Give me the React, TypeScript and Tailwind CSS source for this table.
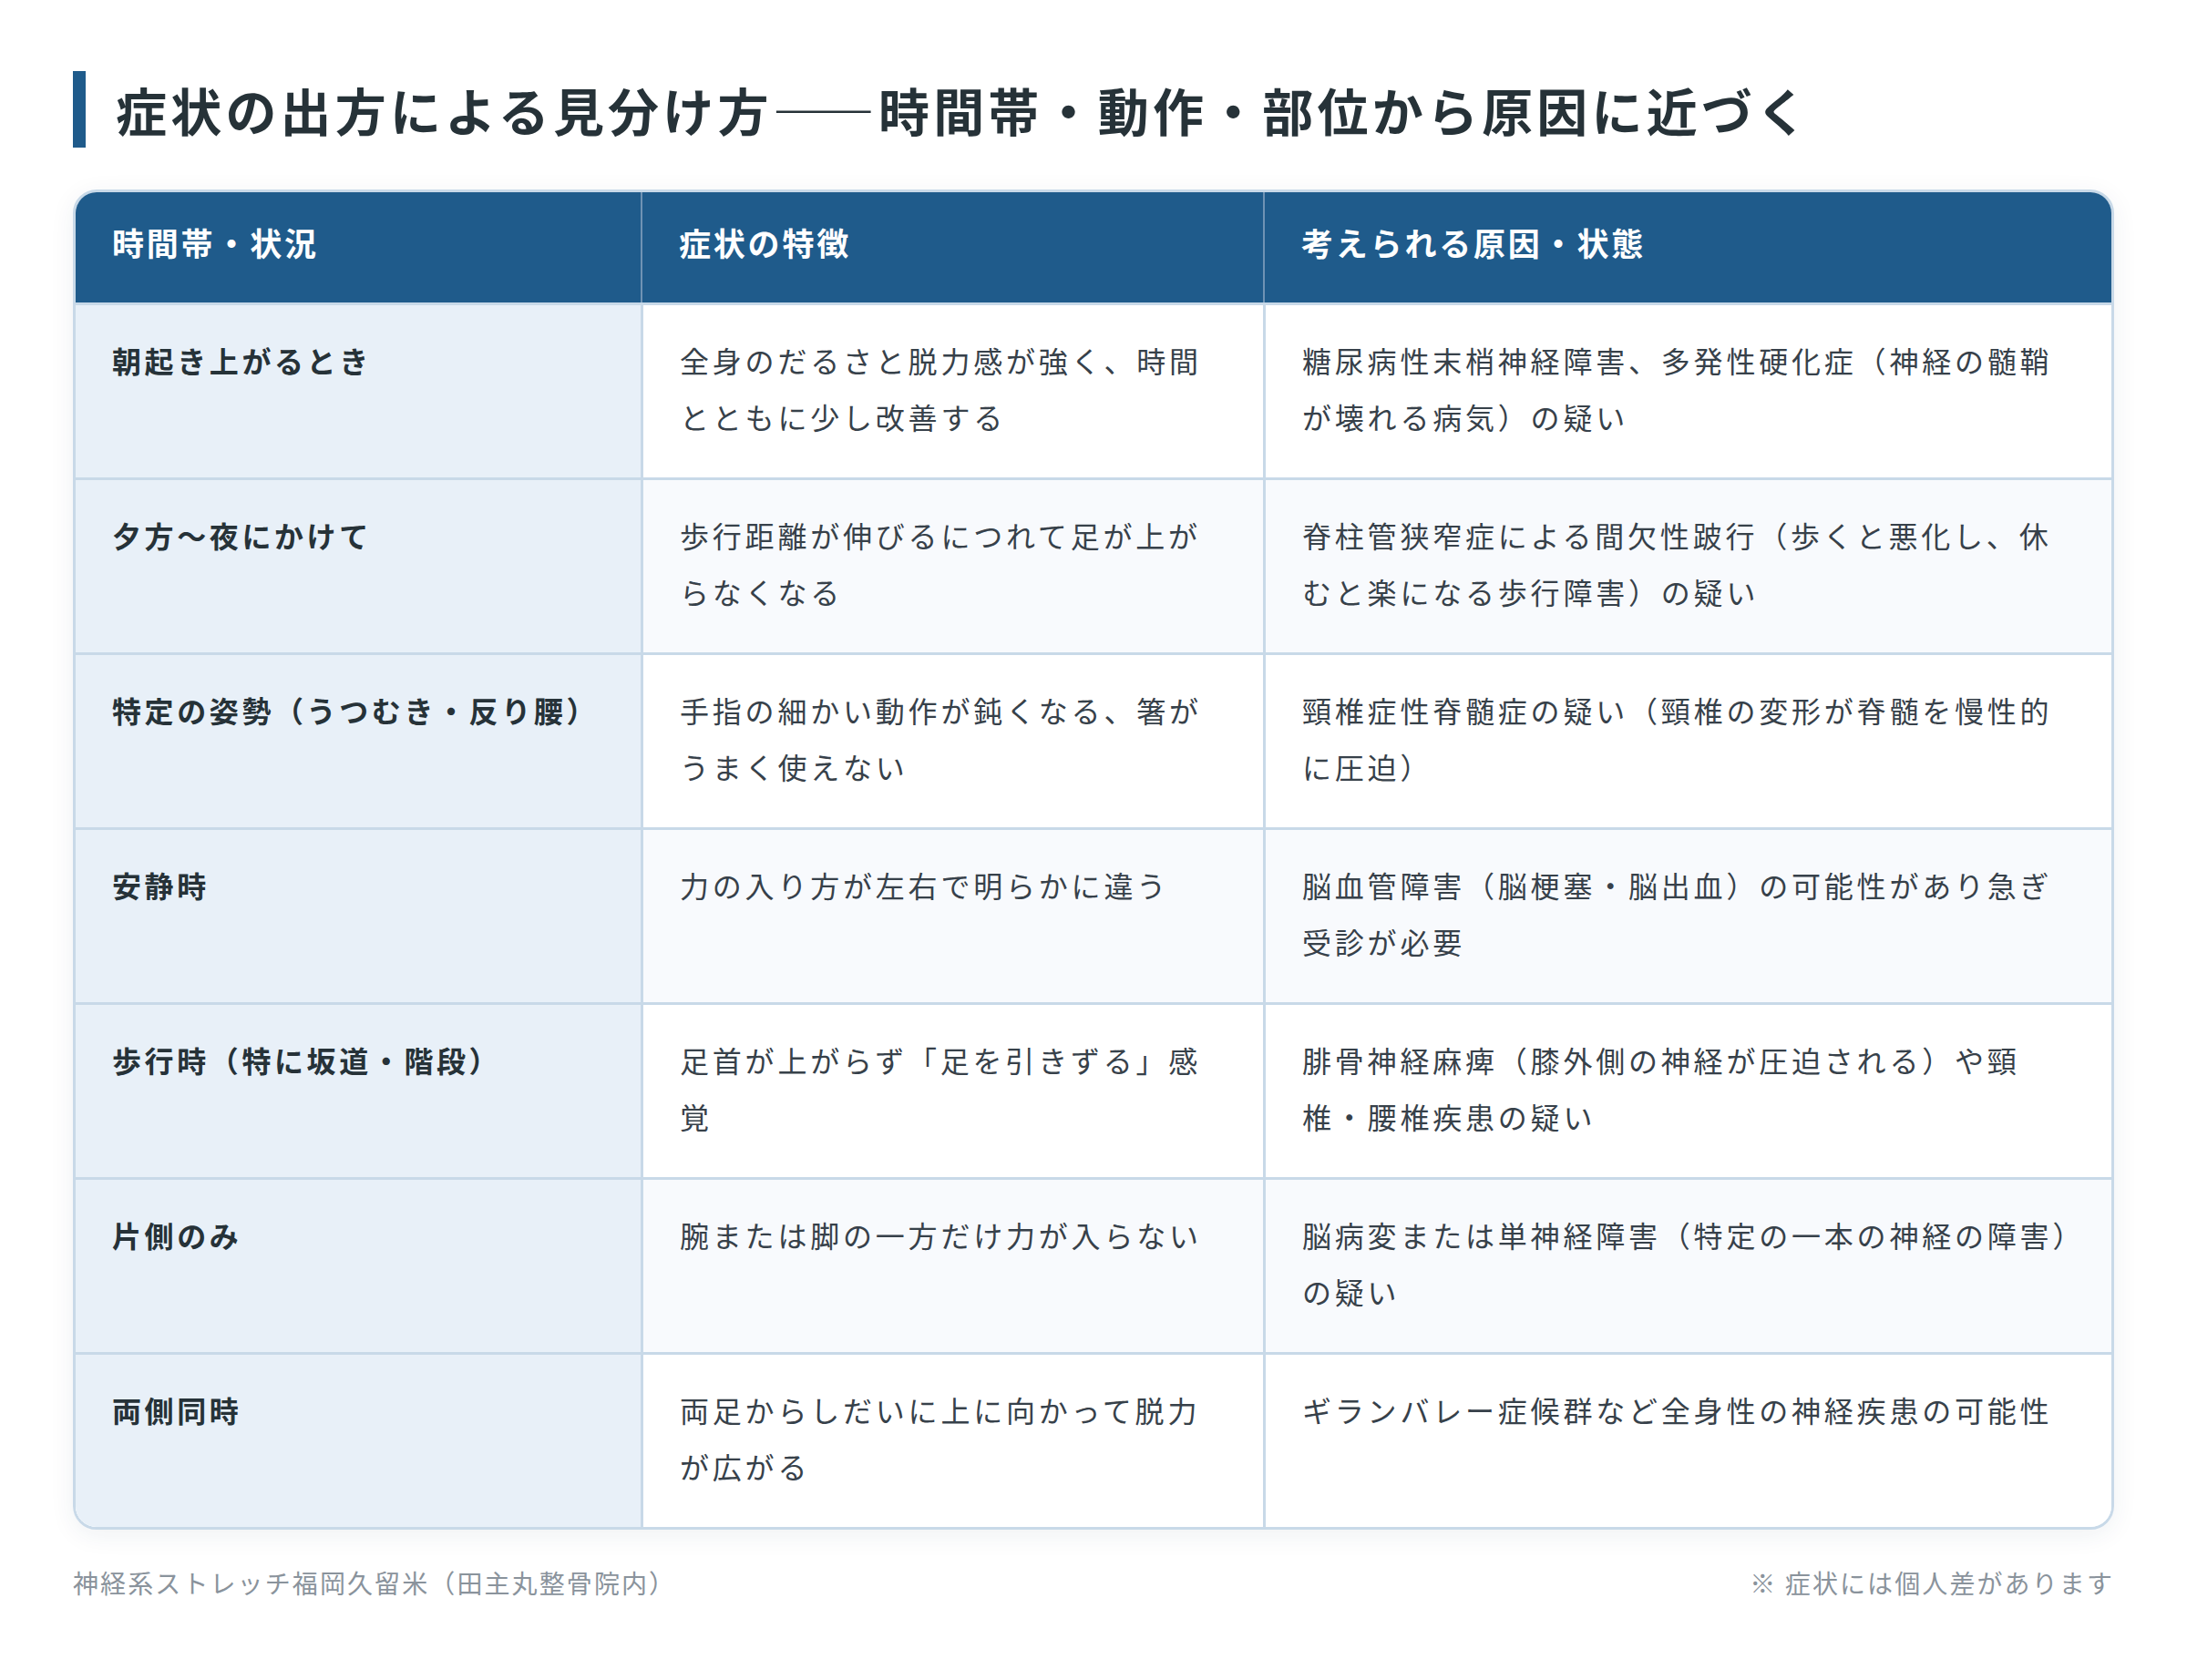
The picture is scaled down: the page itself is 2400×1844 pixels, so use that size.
const rows = [
  {
    when: "朝起き上がるとき",
    symptom: "全身のだるさと脱力感が強く、時間とともに少し改善する",
    cause: "糖尿病性末梢神経障害、多発性硬化症（神経の髄鞘が壊れる病気）の疑い",
  },
  {
    when: "夕方〜夜にかけて",
    symptom: "歩行距離が伸びるにつれて足が上がらなくなる",
    cause: "脊柱管狭窄症による間欠性跛行（歩くと悪化し、休むと楽になる歩行障害）の疑い",
  },
  {
    when: "特定の姿勢（うつむき・反り腰）",
    symptom: "手指の細かい動作が鈍くなる、箸がうまく使えない",
    cause: "頸椎症性脊髄症の疑い（頸椎の変形が脊髄を慢性的に圧迫）",
  },
  {
    when: "安静時",
    symptom: "力の入り方が左右で明らかに違う",
    cause: "脳血管障害（脳梗塞・脳出血）の可能性があり急ぎ受診が必要",
  },
  {
    when: "歩行時（特に坂道・階段）",
    symptom: "足首が上がらず「足を引きずる」感覚",
    cause: "腓骨神経麻痺（膝外側の神経が圧迫される）や頸椎・腰椎疾患の疑い",
  },
  {
    when: "片側のみ",
    symptom: "腕または脚の一方だけ力が入らない",
    cause: "脳病変または単神経障害（特定の一本の神経の障害）の疑い",
  },
  {
    when: "両側同時",
    symptom: "両足からしだいに上に向かって脱力が広がる",
    cause: "ギランバレー症候群など全身性の神経疾患の可能性",
  },
]

export default function App() {
  return (
    <div
      className="min-h-[1844px] bg-white px-[80px] pt-[78px]"
      style={{ fontFamily: '"Noto Sans CJK JP", "Noto Sans", sans-serif' }}
    >
      <h1 className="border-l-[14px] border-[#1f5b8b] pl-[33px] text-[56px] leading-[84px] font-bold tracking-[4.2px] text-[#263238]">
        症状の出方による見分け方<span className="[font-feature-settings:'fwid']">——</span>時間帯・動作・部位から原因に近づく
      </h1>

      <div className="mt-[46px] overflow-hidden rounded-[26px] border-[3px] border-[#c8d9e8] shadow-[0_6px_28px_rgba(30,60,90,0.07)]">
        <div className="grid grid-cols-[620px_683px_1fr] bg-[#1f5b8b] text-[35px] leading-[48px] font-bold tracking-[2.8px] text-white">
          <div className="px-[40px] pt-[31px] pb-[42px]">時間帯・状況</div>
          <div className="border-l-2 border-[#6f93b4] px-[40px] pt-[31px] pb-[42px]">症状の特徴</div>
          <div className="border-l-2 border-[#6f93b4] px-[40px] pt-[31px] pb-[42px]">考えられる原因・状態</div>
        </div>

        {rows.map((row, i) => (
          <div
            key={i}
            className={`grid grid-cols-[620px_683px_1fr] border-t-[3px] border-[#c8d9e8] text-[32px] leading-[62px] ${
              i % 2 === 1 ? "bg-[#f8fafd]" : "bg-white"
            }`}
          >
            <div className="bg-[#e8f0f8] px-[40px] pt-[29px] pb-[36px] font-bold tracking-[3.6px] text-[#263238]">
              {row.when}
            </div>
            <div className="border-l-[3px] border-[#c8d9e8] px-[40px] pt-[29px] pb-[36px] tracking-[3.8px] text-[#37414a]">
              {row.symptom}
            </div>
            <div className="border-l-[3px] border-[#c8d9e8] px-[40px] pt-[29px] pb-[36px] tracking-[3.8px] text-[#37414a]">
              {row.cause}
            </div>
          </div>
        ))}
      </div>

      <div className="mt-[38px] flex justify-between text-[28px] leading-[40px] tracking-[2.1px] text-[#8a939c]">
        <span>神経系ストレッチ福岡久留米（田主丸整骨院内）</span>
        <span>※ 症状には個人差があります</span>
      </div>
    </div>
  )
}
